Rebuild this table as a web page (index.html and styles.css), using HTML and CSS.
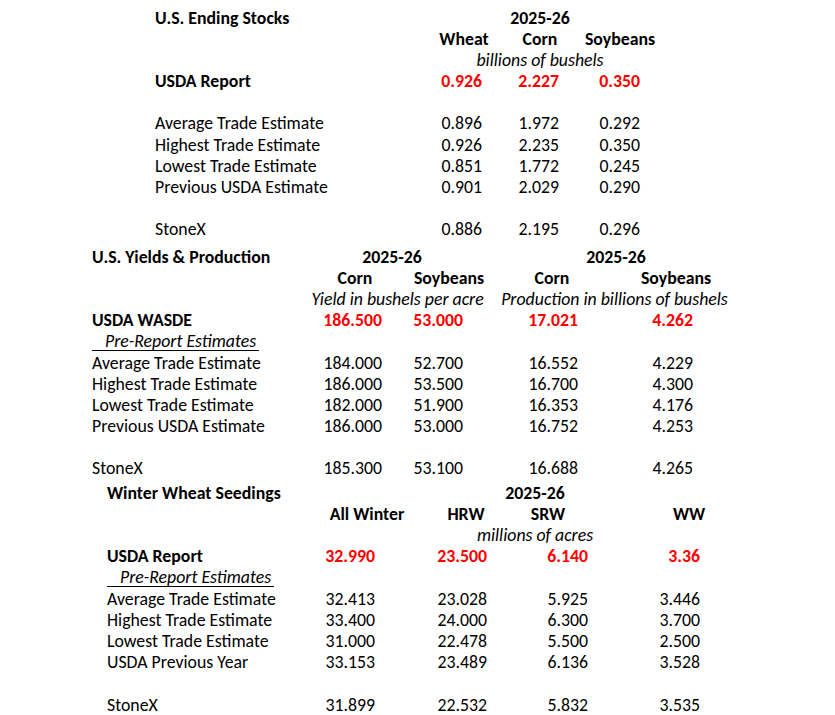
FILE: index.html
```html
<!DOCTYPE html>
<html>
<head>
<meta charset="utf-8">
<link rel="stylesheet" href="styles.css">
</head>
<body>
<div class="page">
  <section class="tbl s1">
    <div class="b">U.S. Ending Stocks</div><div class="b ctr span3 pr8">2025-26</div>
    <div></div><div class="b ctr">Wheat</div><div class="b ctr">Corn</div><div class="b ctr">Soybeans</div>
    <div></div><div class="i ctr span3 pr8">billions of bushels</div>
    <div class="b">USDA Report</div><div class="num red a">0.926</div><div class="num red b2">2.227</div><div class="num red c">0.350</div>
    <div class="blank"></div>
    <div>Average Trade Estimate</div><div class="num a">0.896</div><div class="num b2">1.972</div><div class="num c">0.292</div>
    <div>Highest Trade Estimate</div><div class="num a">0.926</div><div class="num b2">2.235</div><div class="num c">0.350</div>
    <div>Lowest Trade Estimate</div><div class="num a">0.851</div><div class="num b2">1.772</div><div class="num c">0.245</div>
    <div>Previous USDA Estimate</div><div class="num a">0.901</div><div class="num b2">2.029</div><div class="num c">0.290</div>
    <div class="blank"></div>
    <div>StoneX</div><div class="num a">0.886</div><div class="num b2">2.195</div><div class="num c">0.296</div>
  </section>

  <section class="tbl s2">
    <div class="b">U.S. Yields &amp; Production</div><div class="b ctr span2 yr1">2025-26</div><div class="b ctr span2 yr2">2025-26</div>
    <div></div><div class="b ctr">Corn</div><div class="b ctr">Soybeans</div><div class="b ctr">Corn</div><div class="b ctr">Soybeans</div>
    <div></div><div class="i ctr span2 u1">Yield in bushels per acre</div><div class="i ctr span2 u2">Production in billions of bushels</div>
    <div class="b">USDA WASDE</div><div class="num red a">186.500</div><div class="num red b2">53.000</div><div class="num red c">17.021</div><div class="num red d">4.262</div>
    <div class="full"><span class="pre">Pre-Report Estimates</span></div>
    <div>Average Trade Estimate</div><div class="num a">184.000</div><div class="num b2">52.700</div><div class="num c">16.552</div><div class="num d">4.229</div>
    <div>Highest Trade Estimate</div><div class="num a">186.000</div><div class="num b2">53.500</div><div class="num c">16.700</div><div class="num d">4.300</div>
    <div>Lowest Trade Estimate</div><div class="num a">182.000</div><div class="num b2">51.900</div><div class="num c">16.353</div><div class="num d">4.176</div>
    <div>Previous USDA Estimate</div><div class="num a">186.000</div><div class="num b2">53.000</div><div class="num c">16.752</div><div class="num d">4.253</div>
    <div class="blank"></div>
    <div>StoneX</div><div class="num a">185.300</div><div class="num b2">53.100</div><div class="num c">16.688</div><div class="num d">4.265</div>
  </section>

  <section class="tbl s3">
    <div class="b">Winter Wheat Seedings</div><div></div><div class="b ctr span3 mid">2025-26</div>
    <div></div><div class="b ctr">All Winter</div><div class="b ctr">HRW</div><div class="b ctr">SRW</div><div class="b ctr">WW</div>
    <div></div><div></div><div class="i ctr span3 mid">millions of acres</div>
    <div class="b">USDA Report</div><div class="num red a">32.990</div><div class="num red b2">23.500</div><div class="num red c">6.140</div><div class="num red d">3.36</div>
    <div class="full"><span class="pre">Pre-Report Estimates</span></div>
    <div>Average Trade Estimate</div><div class="num a">32.413</div><div class="num b2">23.028</div><div class="num c">5.925</div><div class="num d">3.446</div>
    <div>Highest Trade Estimate</div><div class="num a">33.400</div><div class="num b2">24.000</div><div class="num c">6.300</div><div class="num d">3.700</div>
    <div>Lowest Trade Estimate</div><div class="num a">31.000</div><div class="num b2">22.478</div><div class="num c">5.500</div><div class="num d">2.500</div>
    <div>USDA Previous Year</div><div class="num a">33.153</div><div class="num b2">23.489</div><div class="num c">6.136</div><div class="num d">3.528</div>
    <div class="blank"></div>
    <div>StoneX</div><div class="num a">31.899</div><div class="num b2">22.532</div><div class="num c">5.832</div><div class="num d">3.535</div>
  </section>
</div>
</body>
</html>
```

FILE: styles.css
```css
html, body {
  margin: 0;
  padding: 0;
  background: #fff;
}
body {
  width: 835px;
  height: 715px;
  overflow: hidden;
  font-family: Carlito, Lato, "Liberation Sans", sans-serif;
  font-size: 17.8px;
  color: #000;
}
.page {
  padding-top: 7.5px;
}
.tbl {
  display: grid;
  grid-auto-rows: 21.2px;
  line-height: 21.2px;
  white-space: nowrap;
}
.tbl > div {
  min-width: 0;
}
.b { font-weight: 700; }
.i { font-style: italic; }
.ctr { text-align: center; }
.num { text-align: right; }
.red { color: #ff0000; font-weight: 700; }
.blank, .full { grid-column: 1 / -1; }
.span2 { grid-column: span 2; }
.span3 { grid-column: span 3; }
.pre {
  display: inline-block;
  font-style: italic;
  line-height: 18px;
  border-bottom: 1px solid #000;
  padding-left: 13px;
  padding-right: 3px;
}

/* Section 1: U.S. Ending Stocks */
.s1 {
  margin-left: 155px;
  grid-template-columns: 271px 76px 76px 84px;
}
.s1 .pr8 { padding-right: 8px; }
.s1 .a { padding-right: 20px; }
.s1 .b2 { padding-right: 19px; }
.s1 .c { padding-right: 22px; }

/* Section 2: Yields & Production */
.s2 {
  margin-top: 6px;
  margin-left: 92px;
  grid-template-columns: 218px 90px 98px 108px 140px;
}
.s2 .yr1 { padding-right: 24px; }
.s2 .yr2 { padding-right: 12px; }
.s2 .u1 { padding-right: 13px; }
.s2 .u2 { padding-right: 15px; }
.s2 .a { padding-right: 18px; }
.s2 .b2 { padding-right: 35px; }
.s2 .c { padding-right: 28px; }
.s2 .d { padding-right: 53px; }

/* Section 3: Winter Wheat Seedings */
.s3 {
  margin-top: 3px;
  margin-left: 107px;
  grid-template-columns: 197px 126px 72px 92px 190px;
}
.s3 .mid { padding-right: 144px; }
.s3 .a { padding-right: 55px; }
.s3 .b2 { padding-right: 15px; }
.s3 .c { padding-right: 6px; }
.s3 .d { padding-right: 84px; }
```
